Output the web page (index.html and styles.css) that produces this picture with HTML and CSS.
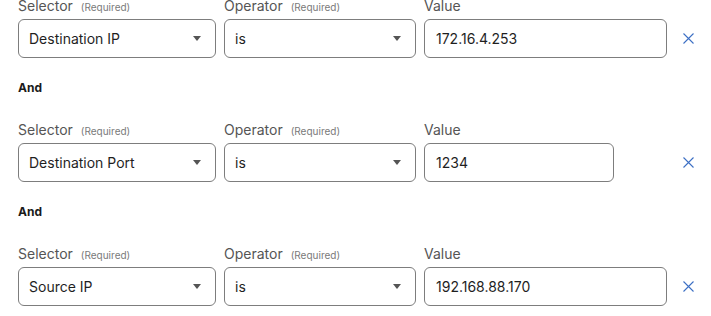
FILE: index.html
```html
<!DOCTYPE html>
<html>
<head>
<meta charset="utf-8">
<link rel="stylesheet" href="styles.css">
</head>
<body>
<div class="conditions">
  <div class="condition">
    <div class="field field-selector">
      <div class="label">Selector <span class="req">(Required)</span></div>
      <div class="box select"><span class="val">Destination IP</span><span class="caret"></span></div>
    </div>
    <div class="field field-operator">
      <div class="label">Operator <span class="req">(Required)</span></div>
      <div class="box select"><span class="val">is</span><span class="caret"></span></div>
    </div>
    <div class="field field-value">
      <div class="label">Value</div>
      <div class="box input full"><span class="val">172.16.4.253</span></div>
    </div>
    <button class="remove" aria-label="Remove"><svg width="11" height="11" viewBox="0 0 11 11"><path d="M0.5 0.5L10.5 10.5M10.5 0.5L0.5 10.5" stroke="#3c6fc4" stroke-width="1.1" fill="none"/></svg></button>
  </div>
  <div class="and">And</div>
  <div class="condition">
    <div class="field field-selector">
      <div class="label">Selector <span class="req">(Required)</span></div>
      <div class="box select"><span class="val">Destination Port</span><span class="caret"></span></div>
    </div>
    <div class="field field-operator">
      <div class="label">Operator <span class="req">(Required)</span></div>
      <div class="box select"><span class="val">is</span><span class="caret"></span></div>
    </div>
    <div class="field field-value">
      <div class="label">Value</div>
      <div class="box input short"><span class="val">1234</span></div>
    </div>
    <button class="remove" aria-label="Remove"><svg width="11" height="11" viewBox="0 0 11 11"><path d="M0.5 0.5L10.5 10.5M10.5 0.5L0.5 10.5" stroke="#3c6fc4" stroke-width="1.1" fill="none"/></svg></button>
  </div>
  <div class="and">And</div>
  <div class="condition">
    <div class="field field-selector">
      <div class="label">Selector <span class="req">(Required)</span></div>
      <div class="box select"><span class="val">Source IP</span><span class="caret"></span></div>
    </div>
    <div class="field field-operator">
      <div class="label">Operator <span class="req">(Required)</span></div>
      <div class="box select"><span class="val">is</span><span class="caret"></span></div>
    </div>
    <div class="field field-value">
      <div class="label">Value</div>
      <div class="box input full"><span class="val">192.168.88.170</span></div>
    </div>
    <button class="remove" aria-label="Remove"><svg width="11" height="11" viewBox="0 0 11 11"><path d="M0.5 0.5L10.5 10.5M10.5 0.5L0.5 10.5" stroke="#3c6fc4" stroke-width="1.1" fill="none"/></svg></button>
  </div>
</div>
</body>
</html>
```
FILE: styles.css
```css
html, body {
  margin: 0;
  padding: 0;
  background: #ffffff;
}
body {
  font-family: Inter, "Noto Sans", sans-serif;
  color: #1f1f1f;
}
.conditions {
  padding: 0 0 0 18px;
}
.condition {
  display: flex;
  align-items: flex-end;
  gap: 8px;
}
.field {
  display: flex;
  flex-direction: column;
}
.field-selector { width: 198px; }
.field-operator { width: 192px; }
.field-value { width: 243px; }
.label {
  display: flex;
  align-items: baseline;
  height: 12px;
  font-size: 14px;
  line-height: 12px;
  color: #555555;
  margin-bottom: 7px;
  white-space: nowrap;
}
.req {
  font-size: 10px;
  line-height: 12px;
  color: #7a7a7a;
  margin-left: 8px;
}
.box {
  box-sizing: border-box;
  height: 39px;
  border: 1px solid #7d7d7d;
  border-radius: 6px;
  display: flex;
  align-items: center;
  padding: 0 10px 0 10px;
  font-size: 14px;
  color: #1f1f1f;
}
.box.input { padding-left: 11px; }
.box.full { width: 243px; }
.box.short { width: 190px; }
.val { flex: 1; }
.caret {
  width: 0;
  height: 0;
  border-left: 4px solid transparent;
  border-right: 4px solid transparent;
  border-top: 5px solid #555555;
  margin-right: 4px;
}
.remove {
  background: none;
  border: 0;
  padding: 0;
  margin: 0 0 0 8px;
  height: 39px;
  display: flex;
  align-items: center;
}
.and {
  font-size: 12px;
  font-weight: 700;
  line-height: 16px;
  color: #1a1a1a;
  margin: 22px 0 28px 0;
}
```
